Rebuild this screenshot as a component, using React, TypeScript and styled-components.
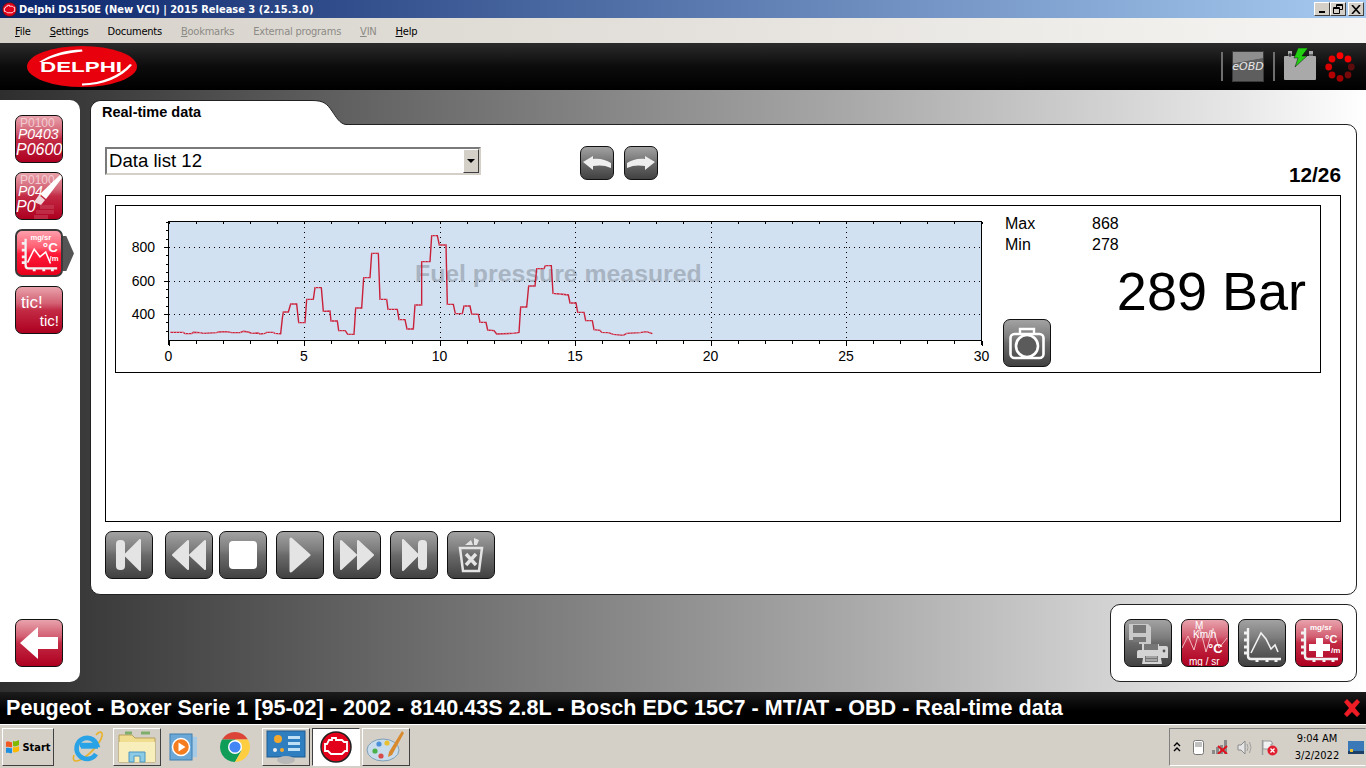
import React from 'react'
import styled, { createGlobalStyle } from 'styled-components'

const GlobalStyle = createGlobalStyle`
  html, body { margin: 0; padding: 0; background: #000; }
  * { box-sizing: border-box; }
`

const UI_FONT = `"DejaVu Sans", Tahoma, sans-serif`
const ARIAL = `"Liberation Sans", Arial, sans-serif`

const Page = styled.div`
  width: 1366px;
  height: 768px;
  overflow: hidden;
  display: flex;
  flex-direction: column;
  font-family: ${ARIAL};
`

/* window chrome */
const TitleBar = styled.div`
  height: 18px;
  flex: none;
  display: flex;
  align-items: center;
  padding: 0 2px;
  background: linear-gradient(90deg, #0a246a 0%, #a6caf0 100%);
`
const TitleText = styled.span`
  margin-left: 2px;
  color: #fff;
  font: bold 11px ${UI_FONT};
  font-stretch: condensed;
  white-space: nowrap;
`
const WinButtons = styled.div`
  margin-left: auto;
  display: flex;
`
const WinButton = styled.div<{ $gap?: number }>`
  width: 16px;
  height: 14px;
  margin-left: ${p => p.$gap ?? 0}px;
  background: #d4d0c8;
  border: 1px solid;
  border-color: #fff #404040 #404040 #fff;
  display: flex;
  align-items: center;
  justify-content: center;
`

const MenuBar = styled.div`
  height: 25px;
  flex: none;
  display: flex;
  align-items: center;
  gap: 19px;
  padding: 1px 0 0 15px;
  background: linear-gradient(90deg, #d6d2ca 0%, #e4e1dc 50%, #f6f5f3 100%);
`
const MenuItem = styled.span<{ $off?: boolean }>`
  font: 11px ${UI_FONT};
  font-stretch: condensed;
  letter-spacing: -0.22px;
  color: ${p => (p.$off ? '#8c8a85' : '#000')};
  u { text-underline-offset: 1px; }
`

const Header = styled.div`
  height: 47px;
  flex: none;
  display: flex;
  align-items: center;
  padding: 0 11px 0 27px;
  background: linear-gradient(180deg, #2b2b2b 0%, #0c0c0c 50%, #000 100%);
`
const HeaderTools = styled.div`
  margin-left: auto;
  display: flex;
  align-items: center;
`
const HeaderRule = styled.div`
  width: 2px;
  height: 29px;
  background: #6e6e6e;
`
const EobdBadge = styled.div`
  width: 32px;
  height: 31px;
  margin: 0 9px;
  display: flex;
  align-items: center;
  justify-content: center;
  font: italic 11px ${UI_FONT};
  color: #e8e8e8;
  background: linear-gradient(170deg, #8e8e8e 0 32%, #5e5e5e 34% 100%);
  border: 1px solid #3a3a3a;
`
const BatterySlot = styled.div`
  margin: 0 8px;
`

/* centre stage */
const Stage = styled.div`
  height: 602px;
  flex: none;
  display: flex;
  gap: 10px;
  padding: 10px 9px 10px 0;
  background: linear-gradient(90deg, #2e2e2e 0%, #6a6a6a 30%, #a8a8a8 62%, #e6e6e6 90%, #fff 100%);
`
const Rail = styled.nav`
  width: 80px;
  flex: none;
  display: flex;
  flex-direction: column;
  gap: 9px;
  padding: 15px;
  background: #fff;
  border-radius: 0 10px 10px 0;
`
const RailSpacer = styled.div`
  flex: 1;
`
const Workspace = styled.div`
  flex: 1;
  display: flex;
  flex-direction: column;
  gap: 9px;
`
const MainPanel = styled.section`
  height: 495px;
  display: flex;
  flex-direction: column;
`
const TabRow = styled.div`
  height: 25px;
  flex: none;
  display: flex;
  margin-bottom: -1px;
  position: relative;
  z-index: 1;
`
const Tab = styled.div`
  width: 222px;
  padding: 3px 0 0 11px;
  background: #fff;
  border-top: 1px solid #222;
  border-left: 1px solid #222;
  border-radius: 10px 0 0 0;
  font: bold 14.5px ${ARIAL};
  color: #000;
`
const PanelBody = styled.div`
  flex: 1;
  background: #fff;
  border: 1px solid #222;
  border-radius: 0 10px 10px 10px;
  padding: 22px 15px 15px 14px;
  display: flex;
  flex-direction: column;
`
const Toolbar = styled.div`
  height: 48px;
  flex: none;
  display: flex;
  align-items: flex-start;
`
const DropDown = styled.div`
  width: 376px;
  height: 28px;
  display: flex;
  align-items: center;
  justify-content: space-between;
  padding-left: 2px;
  font: 18.6px ${ARIAL};
  color: #000;
  background: #fff;
  border: 2px solid;
  border-color: #7a7a7a #d4d0c8 #d4d0c8 #7a7a7a;
`
const DropArrow = styled.div`
  width: 16px;
  height: 24px;
  background: #d4d0c8;
  border: 1px solid;
  border-color: #fff #404040 #404040 #fff;
  display: flex;
  align-items: center;
  justify-content: center;
  &::after {
    content: '';
    border: 4px solid transparent;
    border-top: 4px solid #000;
    border-bottom: 0;
  }
`
const NavGroup = styled.div`
  display: flex;
  gap: 10px;
  margin: -1px 0 0 99px;
`
const Counter = styled.div`
  margin: 16px 0 0 auto;
  font: bold 20.8px/24px ${ARIAL};
  color: #000;
`
const DataBox = styled.div`
  height: 327px;
  flex: none;
  border: 1px solid #000;
  padding: 9px 19px 9px 9px;
`
const ChartFrame = styled.div`
  height: 168px;
  display: flex;
  border: 1px solid #000;
`
const Readout = styled.div`
  flex: 1;
  display: flex;
  flex-direction: column;
  padding: 7px 0 5px 0;
  position: relative;
`
const Stat = styled.div`
  height: 21px;
  display: grid;
  grid-template-columns: 87px auto;
  align-items: center;
  padding-left: 2px;
  font: 16px ${ARIAL};
  color: #000;
`
const BigValue = styled.div`
  font: 54px/54px ${ARIAL};
  color: #000;
  text-align: right;
  padding-right: 14px;
  margin-top: 9px;
`
const CameraSlot = styled.div`
  margin-top: auto;
`
const Transport = styled.div`
  display: flex;
  gap: 9px;
  margin-top: 9px;
  & > :nth-child(2) { margin-left: 3px; }
  & > :nth-child(3) { margin-left: -3px; }
`
const Dock = styled.div`
  align-self: flex-end;
  width: 247px;
  height: 78px;
  display: flex;
  align-items: center;
  justify-content: center;
  gap: 9px;
  background: #fff;
  border: 1px solid #222;
  border-radius: 10px;
`

const TONES = {
  grey: 'linear-gradient(180deg, #a2a2a2 0%, #7d7d7d 38%, #6a6a6a 50%, #414141 100%)',
  red: 'linear-gradient(180deg, #e9a3ac 0%, #d25f72 36%, #c32b45 50%, #ae0020 100%)',
  hot: 'linear-gradient(180deg, #ff9fac 0%, #ff5c70 38%, #ff1a38 52%, #e6001c 100%)',
}

const Tile = styled.button<{ $tone?: keyof typeof TONES; $size?: number }>`
  width: ${p => p.$size ?? 48}px;
  height: ${p => p.$size ?? 48}px;
  flex: none;
  padding: 0;
  position: relative;
  overflow: visible;
  display: flex;
  align-items: center;
  justify-content: center;
  color: #fff;
  background: ${p => TONES[p.$tone ?? 'grey']};
  border: ${p => (p.$tone === 'hot' ? '2px solid #3a3a3a' : '1px solid #111')};
  border-radius: 7px;
  font-family: ${ARIAL};
  svg { display: block; }
`
const ActivePointer = styled.span`
  position: absolute;
  left: 46px;
  top: 5px;
  width: 11px;
  height: 35px;
  background: #555;
  clip-path: polygon(0 0, 30% 0, 100% 50%, 30% 100%, 0 100%);
`
const CodeStack = styled.span`
  width: 100%;
  height: 100%;
  padding-top: 1px;
  overflow: hidden;
  display: flex;
  flex-direction: column;
  border-radius: 6px;
  position: relative;
`
const CodeLine = styled.span<{ $px: number; $line: number; $indent: number; $dim?: boolean; $italic?: boolean }>`
  display: block;
  text-align: left;
  white-space: nowrap;
  padding-left: ${p => p.$indent}px;
  font-size: ${p => p.$px}px;
  line-height: ${p => p.$line}px;
  font-style: ${p => (p.$italic ? 'italic' : 'normal')};
  color: ${p => (p.$dim ? '#f3ccd2' : '#fff')};
`
const BrushLayer = styled.span`
  position: absolute;
  inset: 0;
`
const TicWords = styled.span`
  width: 100%;
  height: 100%;
  padding: 7px 3px 0 5px;
  display: flex;
  flex-direction: column;
  text-align: left;
  font-size: 17px;
  line-height: 18px;
  color: #fff;
  span:last-child {
    align-self: flex-end;
    font-size: 15px;
  }
`

/* status line and task bar */
const StatusBar = styled.div`
  height: 32px;
  flex: none;
  display: flex;
  align-items: center;
  justify-content: space-between;
  padding: 0 3px 0 6px;
  background: linear-gradient(180deg, #1c1c1c 0%, #000 60%);
  color: #fff;
  font: bold 21.58px ${ARIAL};
`
const TaskBar = styled.div`
  flex: 1;
  display: flex;
  align-items: center;
  padding: 3px 0 2px 2px;
  background: #d4d0c8;
  border-top: 1px solid #fff;
`
const StartButton = styled.div`
  width: 52px;
  height: 38px;
  display: flex;
  align-items: center;
  justify-content: center;
  gap: 1px;
  font: bold 11px ${UI_FONT};
  font-stretch: condensed;
  color: #000;
  background: #d4d0c8;
  border: 1px solid;
  border-color: #fff #404040 #404040 #fff;
`
const TaskButton = styled.div<{ $raised?: boolean; $down?: boolean; $gap?: number }>`
  width: 48px;
  height: 38px;
  flex: none;
  margin-left: ${p => p.$gap ?? 2}px;
  display: flex;
  align-items: center;
  justify-content: center;
  background: ${p => (p.$down ? '#fff' : '#d4d0c8')};
  border: 1px solid;
  border-color: ${p =>
    p.$down ? '#404040 #fff #fff #404040' : p.$raised ? '#fff #404040 #404040 #fff' : 'transparent'};
`
const Tray = styled.div`
  margin-left: auto;
  width: 197px;
  height: 38px;
  display: flex;
  align-items: center;
  padding-left: 3px;
  border: 1px solid;
  border-color: #808080 #d4d0c8 #fff #808080;
  svg { display: block; flex: none; }
`
const TrayIcons = styled.div`
  display: flex;
  align-items: center;
  gap: 8px;
  & > :nth-child(2) { margin-left: 4px; }
`
const Clock = styled.div`
  width: 62px;
  margin-left: 8px;
  text-align: center;
  white-space: nowrap;
  font: 11px/17px ${UI_FONT};
  font-stretch: condensed;
  color: #000;
`

/* drawings */
const EngineMark = ({ size }: { size: number }) => (
  <svg width={size} height={size} viewBox="0 0 32 32">
    <circle cx="16" cy="16" r="15" fill="#e2001a" stroke="#222" strokeWidth="1.5" />
    <path
      d="M5 13v7h3l3 3h11l3-3h2v-9h-3l-2-2h-6V7h-4v2h-3l-2 4z"
      fill="none"
      stroke="#fff"
      strokeWidth="1.8"
    />
  </svg>
)

const DelphiLogo = () => (
  <svg width="110" height="41" viewBox="0 0 110 41">
    <ellipse cx="55" cy="20.5" rx="55" ry="20.5" fill="#e8000d" />
    <path d="M12 16C24 8 38 4 55 3.5L55.5 5.5C40 7 27 10 15 16z" fill="#fff" />
    <path d="M55 37.5C75 37 92 30 103 18L105 19C95 32 76 39 55 39.5z" fill="#fff" />
    <text
      x="13"
      y="26"
      textLength="82"
      lengthAdjust="spacingAndGlyphs"
      fontFamily="Liberation Sans"
      fontWeight="bold"
      fontSize="15"
      fill="#fff"
    >
      DELPHI
    </text>
  </svg>
)

const BatteryIcon = () => (
  <svg width="34" height="33" viewBox="0 0 34 33">
    <path d="M5 3h4v5H5zM26 3h4v5h-4z" fill="#aaa" />
    <rect x="1" y="8" width="32" height="24" rx="1" fill="#a9a9a9" />
    <path d="M5 7h4M7 5v4M26 7h4" stroke="#222" strokeWidth="1" />
    <path d="M15 0h10l-6 8h5L12 19l3-9h-4z" fill="#22d012" stroke="#111" strokeWidth="0.5" />
  </svg>
)

const Spinner = () => {
  const shades = ['#ff0000', '#f40000', '#5c0c0c', '#760a0a', '#a00000', '#b40000', '#d80000', '#e60000']
  return (
    <svg width="30" height="30" viewBox="-15 -15 30 30">
      {shades.map((fill, i) => {
        const a = (i * Math.PI) / 4 - Math.PI / 2
        return <circle key={i} cx={11.3 * Math.cos(a)} cy={11.3 * Math.sin(a)} r="3.4" fill={fill} />
      })}
    </svg>
  )
}

const LEFT_TRACE = [
  [30, 352], [70, 352], [75, 356], [95, 356], [100, 352], [120, 353], [130, 355], [170, 353], [175, 351],
  [200, 350], [215, 353], [240, 353], [250, 349], [265, 351], [275, 355], [295, 354], [300, 357], [315, 355],
  [320, 352], [340, 352], [345, 355], [362, 356], [367, 310], [370, 291], [385, 291], [392, 267], [410, 267],
  [416, 323], [435, 323], [440, 253], [460, 253], [465, 218], [484, 218], [490, 289], [510, 288], [513, 318],
  [532, 318], [536, 347], [556, 347], [563, 358], [582, 358], [587, 279], [605, 279], [611, 188], [630, 188],
  [635, 115], [655, 115], [660, 253], [680, 253], [684, 283], [712, 283], [717, 314], [735, 314], [741, 342],
  [760, 342], [765, 270], [782, 270],
]
const RIGHT_TRACE = [
  [5, 270], [5, 140], [30, 140], [35, 62], [52, 62], [58, 90], [78, 90], [82, 268], [100, 268], [106, 296],
  [127, 296], [132, 273], [150, 273], [155, 297], [175, 298], [180, 322], [198, 322], [203, 345], [222, 347],
  [230, 357], [280, 355], [297, 352], [302, 276], [320, 276], [326, 213], [345, 213], [350, 161], [372, 161],
  [376, 152], [394, 152], [399, 235], [420, 237], [445, 240], [450, 264], [468, 264], [473, 292], [492, 292],
  [497, 317], [517, 317], [522, 344], [540, 346], [545, 352], [565, 353], [580, 358], [610, 361], [620, 355],
  [660, 353], [680, 350], [697, 356],
]
const TRACE = [
  ...LEFT_TRACE.map(([x, y]) => [160 + x / 3, 215 + y / 3]),
  ...RIGHT_TRACE.map(([x, y]) => [420 + x / 3, 215 + y / 3]),
]
const tracePoints = TRACE.map(p => p.join(',')).join(' ')
const traceFlats = TRACE.slice(1)
  .map((p, i) => ({ a: TRACE[i], b: p }))
  .filter(({ a, b }) => Math.abs(a[1] - b[1]) < 3)
  .map(({ a, b }) => `M${a[0]} ${a[1]}L${b[0]} ${b[1]}`)
  .join('')

const PLOT = { left: 168.5, right: 981.5, top: 221.5, bottom: 340.5 }
const xAt = (t: number) => PLOT.left + (t * (PLOT.right - PLOT.left)) / 30
const yAt = (v: number) => 314 - (v - 400) * 0.1675

const TICKS_X = Array.from({ length: 31 }, (_, i) => i)
const TICKS_Y = Array.from({ length: 14 }, (_, i) => 300 + i * 50)

const TrendChart = () => (
  <svg width="887" height="166" viewBox="116 206 887 166" style={{ flex: 'none' }}>
    <rect x={PLOT.left} y={PLOT.top} width={PLOT.right - PLOT.left} height={PLOT.bottom - PLOT.top} fill="#d2e1f1" />
    <text x="415" y="282" fontFamily="Liberation Sans" fontWeight="bold" fontSize="24.8" fill="#a8b4c2">
      Fuel pressure measured
    </text>
    <g shapeRendering="crispEdges" stroke="#000" fill="none">
      {[400, 600, 800].map(v => (
        <path key={v} d={`M${PLOT.left} ${Math.round(yAt(v)) + 0.5}H${PLOT.right}`} strokeDasharray="1 4" />
      ))}
      {[5, 10, 15, 20, 25].map(t => (
        <path key={t} d={`M${Math.round(xAt(t)) + 0.5} ${PLOT.top}V${PLOT.bottom}`} strokeDasharray="1 4" />
      ))}
      <path d={`M${PLOT.left} ${PLOT.bottom + 4}V${PLOT.top}H${PLOT.right}V${PLOT.bottom + 4}`} />
      <path d={`M${PLOT.left} ${PLOT.bottom}H${PLOT.right}`} />
      {TICKS_X.map(t => {
        const x = Math.round(xAt(t)) + 0.5
        return <path key={t} d={`M${x} ${PLOT.bottom}v${t % 5 ? 3 : 5}M${x} ${PLOT.top}v2`} />
      })}
      {TICKS_Y.map(v => {
        const y = Math.round(yAt(v)) + 0.5
        return <path key={v} d={`M${PLOT.left} ${y}h${v % 200 ? -3 : -5}`} />
      })}
    </g>
    <polyline points={tracePoints} fill="none" stroke="#c9203a" strokeWidth="1.4" />
    <path d={traceFlats} fill="none" stroke="#f5e8ec" strokeWidth="1" strokeDasharray="1 2" opacity="0.55" />
    <g fontFamily="Liberation Sans" fontSize="14" fill="#000">
      {[400, 600, 800].map(v => (
        <text key={v} x="155" y={yAt(v) + 5} textAnchor="end">
          {v}
        </text>
      ))}
      {[0, 5, 10, 15, 20, 25, 30].map(t => (
        <text key={t} x={xAt(t)} y="361" textAnchor="middle">
          {t}
        </text>
      ))}
    </g>
  </svg>
)

const ICON = '#e4e4e4'

const SkipIcon = ({ flip }: { flip?: boolean }) => (
  <svg width="28" height="34" viewBox="0 0 28 34" style={flip ? { transform: 'scaleX(-1)' } : undefined}>
    <rect x="1" y="2" width="9" height="30" rx="4" fill={ICON} />
    <path d="M25 2L10 17l15 15z" fill={ICON} stroke={ICON} strokeLinejoin="round" strokeWidth="2" />
  </svg>
)
const RewindIcon = ({ flip }: { flip?: boolean }) => (
  <svg width="36" height="30" viewBox="0 0 36 30" style={flip ? { transform: 'scaleX(-1)' } : undefined}>
    <path d="M17 1L2 15l15 14zM34 1L19 15l15 14z" fill={ICON} stroke={ICON} strokeLinejoin="round" strokeWidth="2" />
  </svg>
)
const StopIcon = () => (
  <svg width="28" height="28" viewBox="0 0 28 28">
    <rect width="28" height="28" rx="4" fill="#fff" />
  </svg>
)
const PlayIcon = () => (
  <svg width="22" height="36" viewBox="0 0 22 36">
    <path d="M2 2l18 16L2 34z" fill={ICON} stroke={ICON} strokeLinejoin="round" strokeWidth="3" />
  </svg>
)
const BinIcon = () => (
  <svg width="26" height="36" viewBox="0 0 26 36">
    <path d="M7 8l6-5 2 5zM16 1l5 2-2 5h-3z" fill={ICON} />
    <path d="M2 11h22l-3 23H5z" fill="none" stroke={ICON} strokeWidth="2.5" />
    <path d="M8 17l10 11M18 17L8 28" stroke={ICON} strokeWidth="3.4" />
  </svg>
)
const CameraIcon = () => (
  <svg width="36" height="34" viewBox="0 0 36 34">
    <path d="M11 8V3h14v5" fill="none" stroke="#fff" strokeWidth="2.4" />
    <rect x="1.5" y="8" width="33" height="24" rx="4" fill="none" stroke="#fff" strokeWidth="2.6" />
    <circle cx="18" cy="20" r="11" fill="#5b5b5b" stroke="#fff" strokeWidth="2.6" />
  </svg>
)
const BackArrow = () => (
  <svg width="40" height="34" viewBox="0 0 40 34">
    <path d="M1 17L19 1v10h20v12H19v10z" fill="#fff" />
  </svg>
)
const SwoopArrow = ({ flip }: { flip?: boolean }) => (
  <svg width="30" height="16" viewBox="0 0 30 16" style={flip ? { transform: 'scaleX(-1)' } : undefined}>
    <path d="M1 7L11 1v3c7-1 13 1 18 4v5C23 10 17 10 11 11v4z" fill="#eee" />
  </svg>
)

const ChartGlyph = ({ children }: { children?: React.ReactNode }) => (
  <svg width="46" height="46" viewBox="0 0 46 46">
    <path d="M9 8V36q0 3 3 3H42" fill="none" stroke="#f1f1f1" strokeWidth="2.4" />
    <path d="M5 13h4M5 20h4M5 27h4M5 33h4M18 39v3M28 39v3M37 39v3" stroke="#f1f1f1" strokeWidth="3" />
    {children}
  </svg>
)
const CurveGlyph = () => (
  <ChartGlyph>
    <path d="M12 33L22 13l5 6 5 10 4-4 3 7" fill="none" stroke="#f1f1f1" strokeWidth="1.6" />
  </ChartGlyph>
)
const LiveGlyph = () => (
  <ChartGlyph>
    <path d="M11 33l7-14 6 8 6-5 5 12" fill="none" stroke="#fff" strokeWidth="1.6" />
    <g fontFamily="Liberation Sans" fontWeight="bold" fill="#fff">
      <text x="14" y="9" fontSize="8">mg/sr</text>
      <text x="27" y="22" fontSize="14">°C</text>
      <text x="34" y="31" fontSize="8">/m</text>
    </g>
  </ChartGlyph>
)
const PlusGlyph = () => (
  <ChartGlyph>
    <path d="M20 18h7v6h7v7h-7v6h-7v-6h-7v-7h7z" fill="#fff" />
    <g fontFamily="Liberation Sans" fontWeight="bold" fill="#fff">
      <text x="14" y="10" fontSize="8">mg/sr</text>
      <text x="29" y="23" fontSize="11">°C</text>
      <text x="35" y="33" fontSize="8">/m</text>
    </g>
  </ChartGlyph>
)
const UnitsGlyph = () => (
  <svg width="46" height="46" viewBox="0 0 46 46">
    <path d="M0 28L6 16l6 14 6-22 6 24 7-24 6 20 8-10" fill="none" stroke="#f0bcc4" strokeWidth="1" />
    <g fontFamily="Liberation Sans" fill="#fff">
      <text x="13" y="9" fontSize="10">M</text>
      <text x="11" y="18" fontSize="10">Km/h</text>
      <text x="26" y="33" fontSize="13" fontWeight="bold">°C</text>
      <text x="7" y="45" fontSize="10">mg / sr</text>
    </g>
  </svg>
)
const SavePrintGlyph = () => (
  <svg width="46" height="46" viewBox="0 0 46 46">
    <path d="M4 4h19l3 3v17H14v-4H4z" fill="#c9c9c9" />
    <path d="M8 5h13v8H8zM8 17h13v5H8z" fill="#777" />
    <path d="M22 24h-5v6h-3a2 2 0 0 0-2 2v6h6l-1 6h20l-1-6h7v-10a2 2 0 0 0-2-2h-7v-2z" fill="#d4d4d4" />
    <path d="M19 24h14v6H19zM20 36h13v6H20z" fill="#777" />
    <path d="M21 37h11M21 40h11" stroke="#d4d4d4" />
    <circle cx="39" cy="31" r="1.4" fill="#555" />
  </svg>
)
const BrushStroke = () => (
  <svg width="46" height="46" viewBox="0 0 46 46">
    <path d="M46 0v5L30 26l-6-5z" fill="#fff" />
    <path d="M23 22l6 5-4 5-7-3z" fill="#f0d8dc" />
    <path d="M24 34h14M20 39h18M18 44h14" stroke="#c9465c" strokeWidth="4" opacity="0.55" />
  </svg>
)
const CloseCross = () => (
  <svg width="22" height="22" viewBox="0 0 22 22">
    <path d="M3 5l3-3 5 5 5-5 3 3-5 6 5 6-3 3-5-5-5 5-3-3 5-6z" fill="#ee1c25" />
  </svg>
)
const Flag = () => (
  <svg width="16" height="16" viewBox="0 0 16 16">
    <path d="M1 3c3-2 4 1 6 0v5c-2 1-3-1-6 0z" fill="#f05a22" />
    <path d="M8 2c2 1 4 0 6-1v5c-2 1-4 2-6 1z" fill="#7fba00" />
    <path d="M1 9c3-1 4 1 6 0v5c-2 1-3-1-6 0z" fill="#1c8fe0" />
    <path d="M8 8c2 1 4 0 6-1v5c-2 1-4 2-6 1z" fill="#fdb900" />
  </svg>
)
const IeLogo = () => (
  <svg width="32" height="34" viewBox="0 0 32 34">
    <path d="M24 5C27 1 31 1 30 6S20 24 8 30c-5 2-8 1-6-5" fill="none" stroke="#e8b32c" strokeWidth="1.6" />
    <path d="M24 24a10.5 10.5 0 1 1 1-9H8" fill="none" stroke="#29a3e6" strokeWidth="4.6" />
    <path d="M9 17h17" stroke="#29a3e6" strokeWidth="3.4" />
  </svg>
)
const FolderLogo = () => (
  <svg width="40" height="34" viewBox="0 0 40 34">
    <path d="M2 5h13l3 3h20v24H2z" fill="#f0dd8f" stroke="#b8a25c" />
    <path d="M8 3h7M24 3h9" stroke="#7fae6a" strokeWidth="3" />
    <path d="M2 12h36v20H2z" fill="#f7eebc" />
    <path d="M12 32V22h16v10h-5v-6h-6v6z" fill="#8ccbe6" stroke="#4a96c0" />
  </svg>
)
const MediaLogo = () => (
  <svg width="32" height="32" viewBox="0 0 32 32">
    <path d="M10 4l18 2v20l-18 2z" fill="#a6cbe6" />
    <rect x="1" y="3" width="22" height="26" fill="#6ba8d8" stroke="#3c7eb0" />
    <circle cx="12" cy="16" r="8.5" fill="#f57c1f" stroke="#fff" strokeWidth="1.5" />
    <path d="M9.5 11.5l7 4.5-7 4.5z" fill="#fff" />
  </svg>
)
const ChromeLogo = () => (
  <svg width="30" height="30" viewBox="-15 -15 30 30">
    <path d="M-12.99 -7.5A15 15 0 0 1 12.99 -7.5L0 -7.5z" fill="#db4437" />
    <path d="M-12.99 -7.5A15 15 0 0 0 0 15L6.5 3.75 0 -7.5z" fill="#0f9d58" />
    <path d="M12.99 -7.5A15 15 0 0 1 0 15L6.5 3.75 6.5 -3.75 0 -7.5z" fill="#ffcd40" />
    <path d="M-12.99 -7.5L-6.5 3.75 0 7.5z" fill="#0f9d58" />
    <circle r="7" fill="#fff" />
    <circle r="5.6" fill="#4285f4" />
  </svg>
)
const PanelLogo = () => (
  <svg width="40" height="34" viewBox="0 0 40 34">
    <rect x="1" y="1" width="38" height="26" fill="#2f7fc0" stroke="#1d5a90" />
    <circle cx="12" cy="9" r="4" fill="#f4a92c" />
    <path d="M22 6h12v3H22zM22 12h12v3H22zM22 18h12v3H22z" fill="#bfe0f5" />
    <circle cx="9" cy="20" r="2" fill="#eee" />
    <circle cx="16" cy="20" r="2" fill="#f4a92c" />
    <ellipse cx="20" cy="30" rx="9" ry="4" fill="#b8b8b8" />
  </svg>
)
const PaintLogo = () => (
  <svg width="40" height="34" viewBox="0 0 40 34">
    <ellipse cx="17" cy="20" rx="16" ry="11" fill="#c8dceb" stroke="#7f9fb8" />
    <circle cx="9" cy="21" r="2.6" fill="#49b04a" />
    <circle cx="13" cy="14" r="2.6" fill="#4a90d9" />
    <circle cx="21" cy="13" r="2.6" fill="#e8c030" />
    <circle cx="15" cy="26" r="2.6" fill="#d94a4a" />
    <path d="M36 1l2 2-12 22-4 2 1-5z" fill="#d98a2e" />
  </svg>
)
const TrayChevron = () => (
  <svg width="8" height="12" viewBox="0 0 8 12">
    <path d="M1 5l3-3 3 3M1 10l3-3 3 3" fill="none" stroke="#000" strokeWidth="1.4" />
  </svg>
)
const TrayBattery = () => (
  <svg width="11" height="16" viewBox="0 0 11 16">
    <rect x="0.5" y="1.5" width="10" height="14" rx="2" fill="#fff" stroke="#777" />
    <rect x="2" y="3" width="7" height="5" fill="#c0c0c0" />
  </svg>
)
const TraySignal = () => (
  <svg width="17" height="14" viewBox="0 0 17 14">
    <path d="M0 10h3v4H0zM4 7h3v7H4zM8 5h3v9H8zM12 0h3v14h-3z" fill="#8a8a8a" />
    <path d="M6 6l9 8M15 6l-9 8" stroke="#e0101c" strokeWidth="2" />
  </svg>
)
const TraySpeaker = () => (
  <svg width="16" height="15" viewBox="0 0 16 15">
    <path d="M1 5h3l4-4v13l-4-4H1z" fill="#e6e6e6" stroke="#8a8a8a" />
    <path d="M10 4q2 3.5 0 7M12.5 2q3 5.5 0 11" fill="none" stroke="#a0a0a0" />
  </svg>
)
const TrayAlert = () => (
  <svg width="17" height="17" viewBox="0 0 17 17">
    <path d="M1.5 1v15" stroke="#9a9a9a" strokeWidth="1.4" />
    <path d="M2 2h8l2 3h-2v5H2z" fill="#f1f1f1" stroke="#9a9a9a" />
    <circle cx="11.5" cy="11.5" r="5" fill="#e02030" />
    <path d="M9.5 9.5l4 4M13.5 9.5l-4 4" stroke="#fff" strokeWidth="1.3" />
  </svg>
)
const TrayDesktop = () => (
  <svg width="16" height="13" viewBox="0 0 16 13">
    <rect width="16" height="13" fill="#3b78b8" />
    <path d="M0 10h16v3H0z" fill="#1d3f66" />
    <rect x="2" y="8" width="3" height="3" fill="#e8c030" />
  </svg>
)

const MENU = [
  { key: 'F', rest: 'ile' },
  { key: 'S', rest: 'ettings' },
  { key: '', rest: 'Documents' },
  { key: 'B', rest: 'ookmarks', off: true },
  { key: '', rest: 'External programs', off: true },
  { key: 'V', rest: 'IN', off: true },
  { key: 'H', rest: 'elp' },
]

const App = () => (
  <Page>
    <GlobalStyle />
    <TitleBar>
      <EngineMark size={15} />
      <TitleText>Delphi DS150E (New VCI) | 2015 Release 3 (2.15.3.0)</TitleText>
      <WinButtons>
        <WinButton>
          <svg width="8" height="8" viewBox="0 0 8 8"><path d="M1 6h6v2H1z" /></svg>
        </WinButton>
        <WinButton>
          <svg width="10" height="10" viewBox="0 0 10 10">
            <path d="M3.5 3V.5h6v5H7M.5 3.5h6v6h-6zM.5 4.5h6M3.5 1.5h6" fill="none" stroke="#000" />
          </svg>
        </WinButton>
        <WinButton $gap={2}>
          <svg width="10" height="9" viewBox="0 0 10 9">
            <path d="M1 0l8 9M9 0L1 9" stroke="#000" strokeWidth="1.6" />
          </svg>
        </WinButton>
      </WinButtons>
    </TitleBar>
    <MenuBar>
      {MENU.map(item => (
        <MenuItem key={item.key + item.rest} $off={item.off}>
          {item.key && <u>{item.key}</u>}
          {item.rest}
        </MenuItem>
      ))}
    </MenuBar>
    <Header>
      <DelphiLogo />
      <HeaderTools>
        <HeaderRule />
        <EobdBadge>eOBD</EobdBadge>
        <HeaderRule />
        <BatterySlot><BatteryIcon /></BatterySlot>
        <Spinner />
      </HeaderTools>
    </Header>
    <Stage>
      <Rail>
        <Tile $tone="red">
          <CodeStack>
            <CodeLine $px={12} $line={12} $indent={4} $dim>P0100</CodeLine>
            <CodeLine $px={14} $line={11} $indent={2} $italic>P0403</CodeLine>
            <CodeLine $px={16} $line={19} $indent={0} $italic>P0600</CodeLine>
          </CodeStack>
        </Tile>
        <Tile $tone="red">
          <CodeStack>
            <CodeLine $px={12} $line={12} $indent={4} $dim>P0100</CodeLine>
            <CodeLine $px={14} $line={11} $indent={2} $italic>P04</CodeLine>
            <CodeLine $px={16} $line={19} $indent={0} $italic>P0</CodeLine>
            <BrushLayer><BrushStroke /></BrushLayer>
          </CodeStack>
        </Tile>
        <Tile $tone="hot">
          <LiveGlyph />
          <ActivePointer />
        </Tile>
        <Tile $tone="red">
          <TicWords>
            <span>tic!</span>
            <span>tic!</span>
          </TicWords>
        </Tile>
        <RailSpacer />
        <Tile $tone="red">
          <BackArrow />
        </Tile>
      </Rail>
      <Workspace>
        <MainPanel>
          <TabRow>
            <Tab>Real-time data</Tab>
            <svg width="34" height="25" viewBox="0 0 34 25">
              <path d="M0 .5C12 .5 15 4 20 11c4 6 8 13 14 13.5V25H0z" fill="#fff" />
              <path d="M0 .5C12 .5 15 4 20 11c4 6 8 13 14 13.5" fill="none" stroke="#222" />
            </svg>
          </TabRow>
          <PanelBody>
            <Toolbar>
              <DropDown>
                Data list 12
                <DropArrow />
              </DropDown>
              <NavGroup>
                <Tile $size={34}><SwoopArrow /></Tile>
                <Tile $size={34}><SwoopArrow flip /></Tile>
              </NavGroup>
              <Counter>12/26</Counter>
            </Toolbar>
            <DataBox>
              <ChartFrame>
                <TrendChart />
                <Readout>
                  <Stat><span>Max</span><span>868</span></Stat>
                  <Stat><span>Min</span><span>278</span></Stat>
                  <BigValue>289 Bar</BigValue>
                  <CameraSlot>
                    <Tile><CameraIcon /></Tile>
                  </CameraSlot>
                </Readout>
              </ChartFrame>
            </DataBox>
            <Transport>
              <Tile><SkipIcon /></Tile>
              <Tile><RewindIcon /></Tile>
              <Tile><StopIcon /></Tile>
              <Tile><PlayIcon /></Tile>
              <Tile><RewindIcon flip /></Tile>
              <Tile><SkipIcon flip /></Tile>
              <Tile><BinIcon /></Tile>
            </Transport>
          </PanelBody>
        </MainPanel>
        <Dock>
          <Tile><SavePrintGlyph /></Tile>
          <Tile $tone="red"><UnitsGlyph /></Tile>
          <Tile><CurveGlyph /></Tile>
          <Tile $tone="red"><PlusGlyph /></Tile>
        </Dock>
      </Workspace>
    </Stage>
    <StatusBar>
      <span>Peugeot - Boxer Serie 1 [95-02] - 2002 - 8140.43S 2.8L - Bosch EDC 15C7 - MT/AT - OBD - Real-time data</span>
      <CloseCross />
    </StatusBar>
    <TaskBar>
      <StartButton><Flag />Start</StartButton>
      <TaskButton $gap={10}><IeLogo /></TaskButton>
      <TaskButton $raised $gap={1}><FolderLogo /></TaskButton>
      <TaskButton $gap={0}><MediaLogo /></TaskButton>
      <TaskButton $gap={2}><ChromeLogo /></TaskButton>
      <TaskButton $raised $gap={3}><PanelLogo /></TaskButton>
      <TaskButton $down><EngineMark size={32} /></TaskButton>
      <TaskButton $raised><PaintLogo /></TaskButton>
      <Tray>
        <TrayIcons>
          <TrayChevron />
          <TrayBattery />
          <TraySignal />
          <TraySpeaker />
          <TrayAlert />
        </TrayIcons>
        <Clock>
          9:04 AM
          <br />
          3/2/2022
        </Clock>
        <TrayDesktop />
      </Tray>
    </TaskBar>
  </Page>
)

export default App
